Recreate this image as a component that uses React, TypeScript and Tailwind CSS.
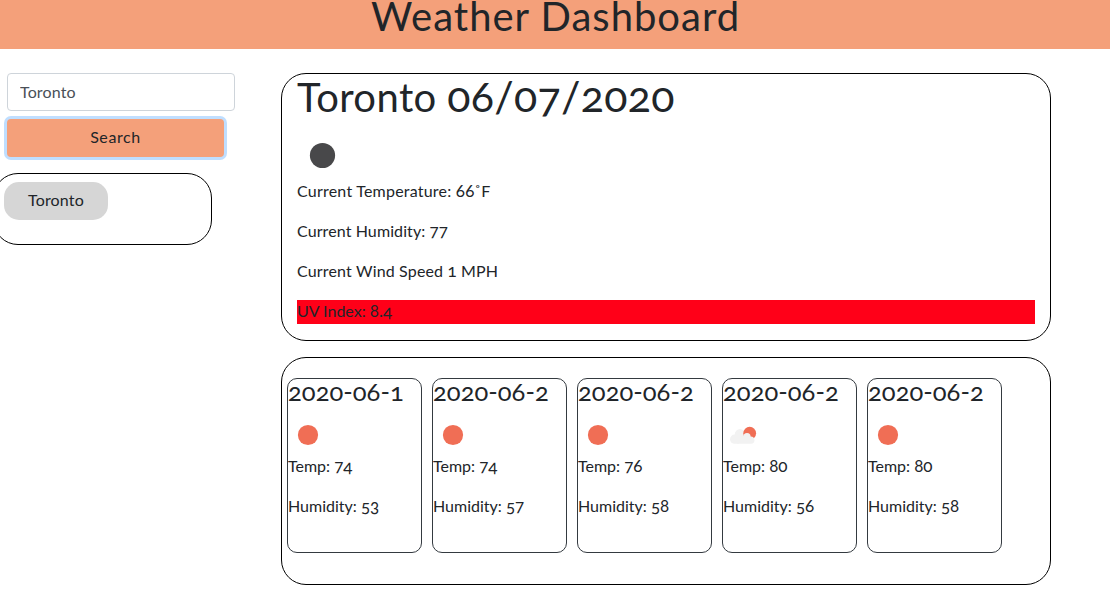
type Sky = 'clear' | 'cloudy';

interface Day {
  date: string;
  sky: Sky;
  temp: number;
  humidity: number;
}

const days: Day[] = [
  { date: '2020-06-1', sky: 'clear', temp: 74, humidity: 53 },
  { date: '2020-06-2', sky: 'clear', temp: 74, humidity: 57 },
  { date: '2020-06-2', sky: 'clear', temp: 76, humidity: 58 },
  { date: '2020-06-2', sky: 'cloudy', temp: 80, humidity: 56 },
  { date: '2020-06-2', sky: 'clear', temp: 80, humidity: 58 },
];

function SkyIcon({ sky }: { sky: Sky }) {
  return (
    <svg className="block size-10" viewBox="0 0 40 40" aria-hidden="true">
      {sky === 'clear' ? (
        <circle cx="20" cy="20" r="10.1" fill="#f06e55" />
      ) : (
        <>
          <circle cx="17" cy="19.4" r="5.3" fill="#f2f2f2" />
          <circle cx="26.7" cy="18.2" r="6.4" fill="#f06e55" />
          <circle cx="24" cy="21.6" r="3.6" fill="#f2f2f2" />
          <rect x="7" y="19.6" width="12" height="9.2" rx="4.6" fill="#f2f2f2" />
          <rect x="12" y="21.6" width="19.4" height="7.2" rx="3.6" fill="#f2f2f2" />
        </>
      )}
    </svg>
  );
}

function DayCard({ day }: { day: Day }) {
  return (
    <article className="h-[175px] w-[135px] shrink-0 rounded-[10px] border border-[#343a40]">
      <h5 className="mb-2 h-7 text-[25.5px] leading-[25px] tracking-[0.05px] whitespace-nowrap">{day.date}</h5>
      <SkyIcon sky={day.sky} />
      <p className="mb-4 h-6 leading-[22px]">
        Temp: <span className="text-[17px] leading-none">{day.temp}</span>
      </p>
      <p className="h-6 leading-[22px]">
        Humidity: <span className="text-[17px] leading-none">{day.humidity}</span>
      </p>
    </article>
  );
}

export default function App() {
  return (
    <div className="h-[600px] w-full overflow-hidden bg-white font-['Lato',sans-serif] text-base text-[#212529] oldstyle-nums">
      <header className="flex h-[49px] items-start justify-center bg-[#f4a07a]">
        <h1 className="-mt-2 pl-px text-[40px] leading-[48px] tracking-[1px]">Weather Dashboard</h1>
      </header>
      <div className="flex pt-6">
        <aside className="w-[281px] shrink-0">
          <input
            defaultValue="Toronto"
            className="ml-[7px] block h-[38px] w-[228px] rounded-[4px] border border-[#ced4da] px-3 pb-0.5 tracking-[0.15px] text-[#495057] outline-none"
          />
          <button className="mt-2 ml-[7px] block h-[38px] w-[217px] rounded-[4px] bg-[#f4a07a] pb-0.5 tracking-[0.6px] shadow-[0_0_0_3px_#bfdeff]">
            Search
          </button>
          <div className="mt-4 -ml-[7px] h-[72px] w-[219px] rounded-[25px] border border-black pt-2 pl-[10px]">
            <button className="block h-[38px] w-[104px] rounded-[15px] bg-[#d6d6d6] pb-0.5 tracking-[0.15px]">Toronto</button>
          </div>
        </aside>
        <main className="w-[770px] shrink-0">
          <section className="h-[268px] rounded-[25px] border border-black px-[15px]">
            <h1 className="mb-2 h-12 text-[40px] leading-[46px] tracking-[0.4px] whitespace-nowrap">
              Toronto <span className="text-[43px] leading-none tracking-[0.3px]">06/07/2020</span>
            </h1>
            <svg className="block size-[50px]" viewBox="0 0 50 50" aria-hidden="true">
              <circle cx="25.5" cy="25.5" r="12.6" fill="#48484a" />
            </svg>
            <p className="mb-4 h-6 leading-[22px] tracking-[0.22px]">
              Current Temperature: <span className="text-[17px] leading-none">66</span>˚F
            </p>
            <p className="mb-4 h-6 leading-[22px] tracking-[0.1px]">
              Current Humidity: <span className="text-[17px] leading-none">77</span>
            </p>
            <p className="mb-4 h-6 leading-[22px] tracking-[0.16px]">
              Current Wind Speed <span className="text-[17px] leading-none">1</span> MPH
            </p>
            <p className="h-6 bg-[#ff0018] leading-[22px]">
              UV Index: <span className="text-[17px] leading-none">8.4</span>
            </p>
          </section>
          <section className="mt-4 flex h-[228px] gap-[10px] rounded-[25px] border border-black pt-5 pl-[5px]">
            {days.map((day, i) => (
              <DayCard key={i} day={day} />
            ))}
          </section>
        </main>
      </div>
    </div>
  );
}
